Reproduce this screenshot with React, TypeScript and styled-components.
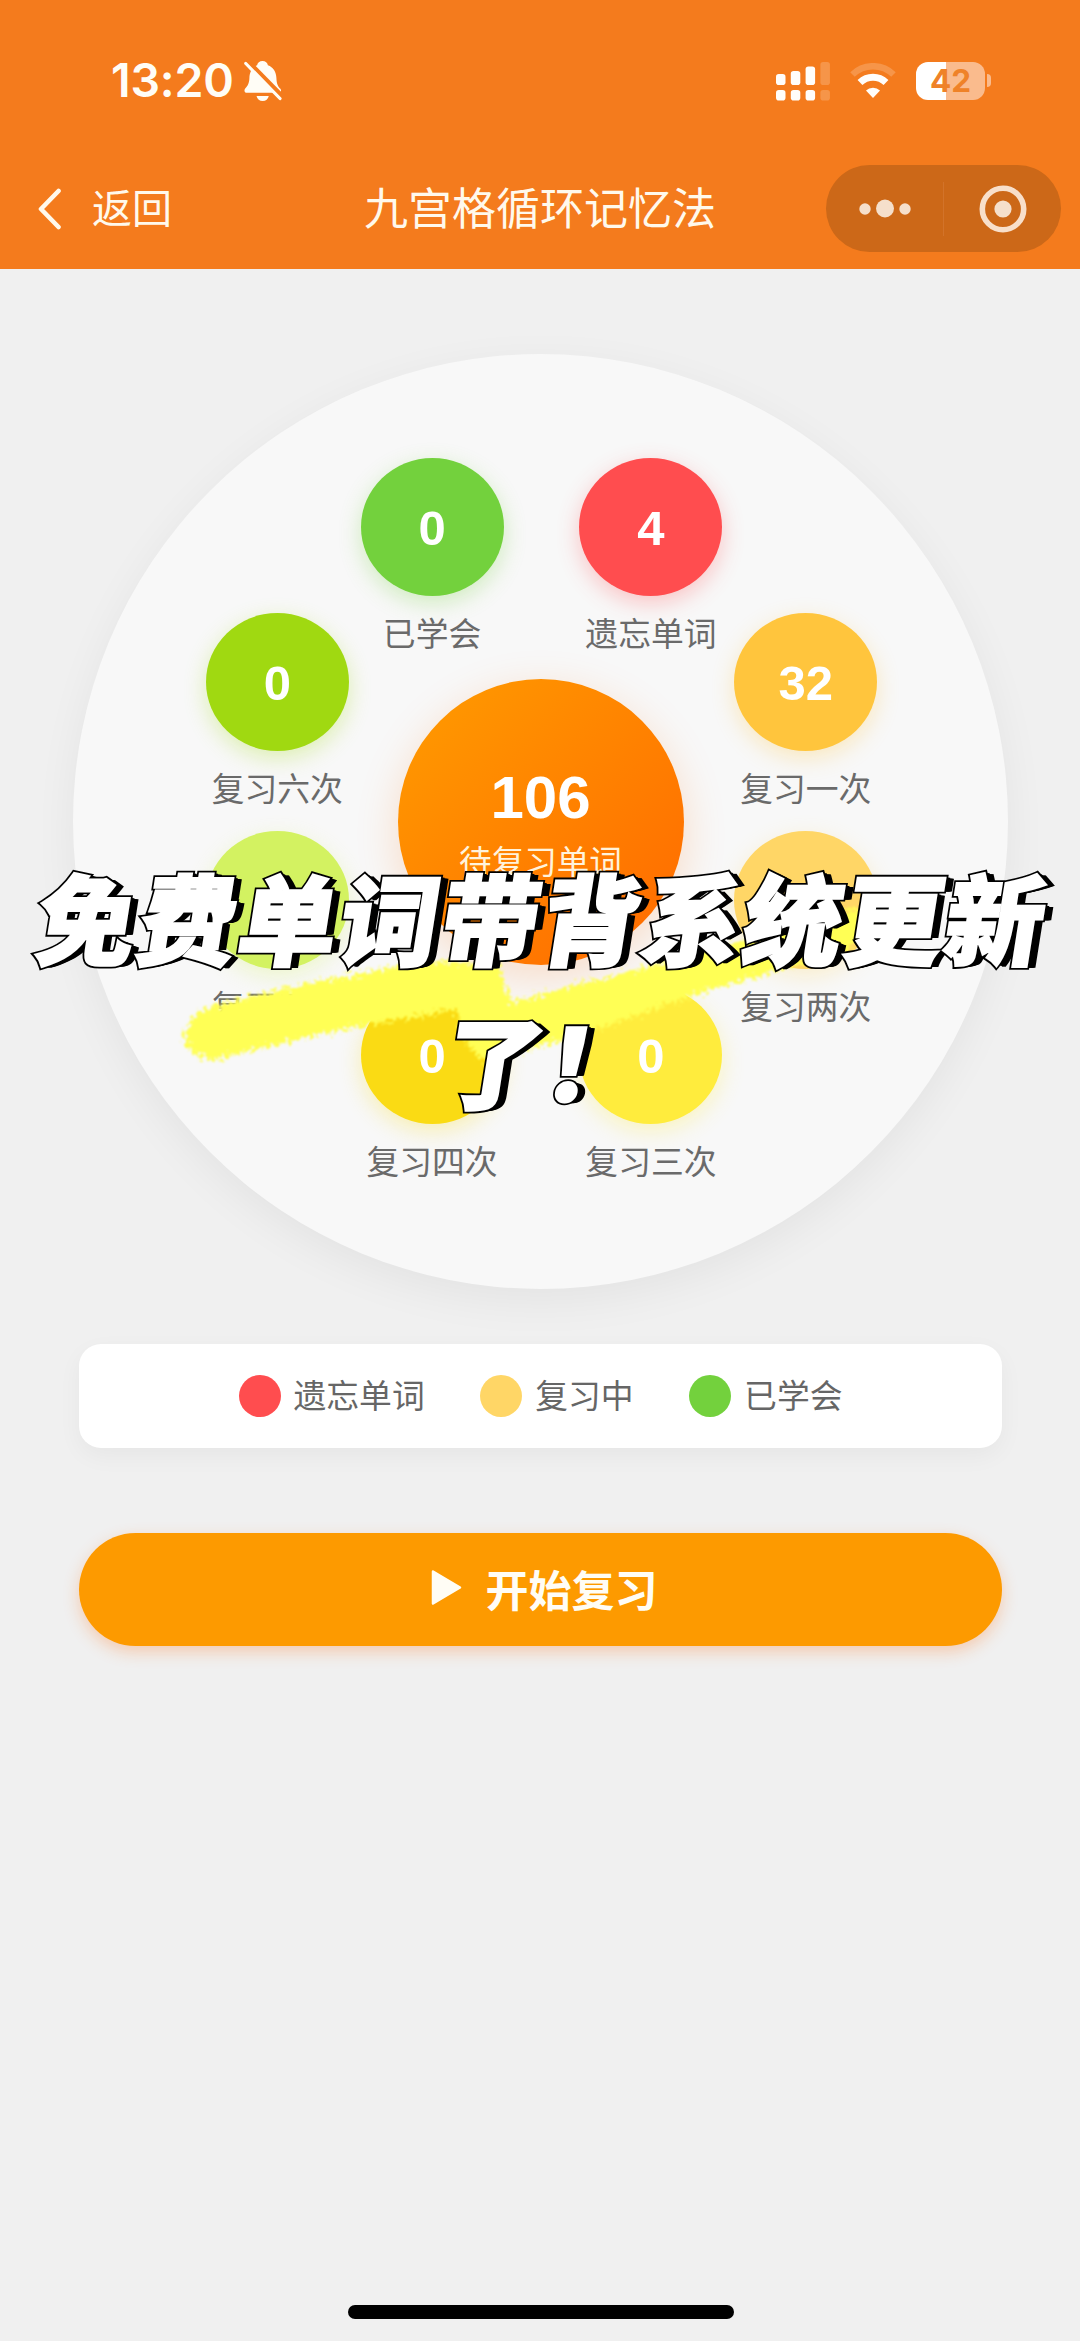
import React from "react";
import styled, { createGlobalStyle } from "styled-components";

const CJK = '"Noto Sans CJK SC", sans-serif';

const GlobalStyle = createGlobalStyle`
  * { box-sizing: border-box; }
  body { margin: 0; background: #f0f0f0; }
`;

const Screen = styled.div`
  position: relative;
  display: flex;
  flex-direction: column;
  width: 1080px;
  height: 2341px;
  overflow: hidden;
  background: #f0f0f0;
  font-family: "Liberation Sans", ${CJK};
`;

const Header = styled.header`
  display: flex;
  flex-direction: column;
  flex: none;
  height: 269px;
  background: #f47b1d;
  color: #fff9ec;
`;

const StatusBar = styled.div`
  display: flex;
  align-items: center;
  justify-content: space-between;
  height: 161px;
  padding: 0 89px 0 111px;
`;

const StatusGroup = styled.div<{ $gap: number }>`
  display: flex;
  align-items: center;
  gap: ${(p) => p.$gap}px;
`;

const Clock = styled.span`
  font: 600 46.5px/1 Inter, sans-serif;
  letter-spacing: -0.2px;
  color: #fffdf6;
`;

const Battery = styled.div`
  display: flex;
  align-items: center;
  gap: 2px;
`;

const BatteryBody = styled.div<{ $level: number }>`
  display: grid;
  place-items: center;
  width: 69px;
  height: 38px;
  border-radius: 12px;
  background: linear-gradient(
    90deg,
    #fff ${(p) => p.$level}%,
    #fabb8d ${(p) => p.$level}%
  );
  color: #ef8228;
  font: 700 31.5px/38px Inter, sans-serif;
`;

const BatteryNub = styled.div`
  width: 4px;
  height: 13px;
  border-radius: 0 5px 5px 0;
  background: #fabb8d;
`;

const NavBar = styled.nav`
  display: grid;
  grid-template-columns: 1fr auto 1fr;
  align-items: center;
  height: 95px;
  padding: 0 19px 0 37px;
  font-family: ${CJK};
`;

const Back = styled.div`
  display: flex;
  align-items: center;
  gap: 30px;
`;

const BackLabel = styled.span`
  padding-bottom: 5px;
  font-size: 40px;
  line-height: 1;
`;

const Title = styled.h1`
  margin: 0;
  padding: 0 18px 5px 0;
  font-size: 44px;
  font-weight: 400;
  line-height: 1;
`;

const Capsule = styled.div`
  display: flex;
  justify-self: end;
  align-items: center;
  width: 235px;
  height: 87px;
  border-radius: 44px;
  background: #cc6818;
`;

const CapsuleHalf = styled.div`
  display: grid;
  flex: 1;
  place-items: center;
`;

const Divider = styled.div`
  width: 1px;
  height: 54px;
  background: #d2732a;
`;

const Main = styled.main`
  display: flex;
  flex-direction: column;
  flex: 1;
  align-items: center;
  padding: 85px 0 0 1px;
`;

const Wheel = styled.section`
  position: relative;
  display: grid;
  place-items: center;
  width: 935px;
  height: 935px;
  border-radius: 50%;
  background: #f8f8f8;
  box-shadow: 0 12px 44px rgba(0, 0, 0, 0.055);
`;

const Hub = styled.div`
  display: flex;
  flex-direction: column;
  align-items: center;
  width: 286px;
  height: 286px;
  padding-top: 83px;
  border-radius: 50%;
  background: linear-gradient(135deg, #ff9800 8%, #ff6f00 88%);
  box-shadow: 0 12px 44px rgba(255, 111, 0, 0.2);
  color: #fff;
`;

const HubCount = styled.strong`
  font-size: 60px;
  line-height: 72px;
`;

const HubLabel = styled.span`
  margin-top: 2px;
  color: #fff3dc;
  font: 400 32.6px/48px ${CJK};
`;

const Node = styled.div`
  position: absolute;
  display: flex;
  flex-direction: column;
  align-items: center;
  width: 160px;
  height: 200px;
  margin: -100px 0 0 -80px;
`;

const NodeDisc = styled.div<{ $color: string }>`
  display: grid;
  flex: none;
  place-items: center;
  width: 143px;
  height: 138px;
  padding-top: 3px;
  border-radius: 50%;
  background: ${(p) => p.$color};
  box-shadow: 0 7px 22px ${(p) => p.$color}4d;
  color: #fff;
  font-size: 49px;
  font-weight: 700;
  line-height: 1;
`;

const NodeLabel = styled.span`
  margin-top: 12px;
  color: #6a6a6a;
  font: 400 32.8px/48px ${CJK};
  white-space: nowrap;
`;

const Legend = styled.section`
  display: flex;
  align-items: center;
  justify-content: center;
  gap: 55.5px;
  width: 923px;
  height: 104px;
  margin-top: 55px;
  border-radius: 22px;
  background: #fff;
  box-shadow: 0 8px 24px rgba(0, 0, 0, 0.045);
`;

const LegendItem = styled.div`
  display: flex;
  align-items: center;
  gap: 13px;
`;

const LegendLabel = styled.span`
  padding-bottom: 4px;
  color: #666;
  font: 400 32.8px/48px ${CJK};
`;

const LegendDot = styled.i<{ $color: string }>`
  width: 42px;
  height: 42px;
  border-radius: 50%;
  background: ${(p) => p.$color};
`;

const StartButton = styled.button`
  display: flex;
  align-items: center;
  justify-content: center;
  gap: 24px;
  width: 923px;
  height: 113px;
  margin-top: 85px;
  padding: 0 0 3px 7px;
  border: 0;
  border-radius: 57px;
  background: #fd9a00;
  box-shadow: 0 6px 16px rgba(255, 120, 30, 0.3);
  color: #fffdf5;
  font: 700 43px/60px ${CJK};
`;

const HomeIndicator = styled.div`
  align-self: center;
  width: 386px;
  height: 14px;
  margin: 0 0 22px 2px;
  border-radius: 7px;
  background: #000;
`;

const Brush = styled.svg`
  position: absolute;
  top: 880px;
  left: 160px;
`;

const Headline = styled.div`
  position: absolute;
  top: 844px;
  left: 0;
  display: flex;
  flex-direction: column;
  align-items: center;
  width: 1080px;
`;

const extrusion = Array.from(
  { length: 9 },
  (_, i) => `${i + 1}px ${((i + 1) / 12).toFixed(2)}px 0 #000`
).join(", ");

const HeadlineRow = styled.div<{ $shift: number }>`
  position: relative;
  height: 143px;
  transform: translateX(${(p) => p.$shift}px) skewX(-9deg);
  color: #000;
  font: 900 98.5px/143px ${CJK};
  letter-spacing: 2.4px;
  white-space: nowrap;
  -webkit-text-stroke: 6px #000;
  text-shadow: ${extrusion};

  &::after {
    content: attr(data-text);
    position: absolute;
    top: 0;
    left: 0;
    color: #fff;
    -webkit-text-stroke: 2.4px #fff;
    text-shadow: none;
  }
`;

const nodes = [
  { label: "遗忘单词", count: 4, color: "#ff4d4f" },
  { label: "复习一次", count: 32, color: "#ffc53d" },
  { label: "复习两次", count: 70, color: "#ffd666" },
  { label: "复习三次", count: 0, color: "#ffec3d" },
  { label: "复习四次", count: 0, color: "#fadb14" },
  { label: "复习五次", count: 0, color: "#d3f261" },
  { label: "复习六次", count: 0, color: "#a0d911" },
  { label: "已学会", count: 0, color: "#73d13d" },
];

const legend = [
  { label: "遗忘单词", color: "#ff4d4f" },
  { label: "复习中", color: "#ffd666" },
  { label: "已学会", color: "#73d13d" },
];

const RADIUS = 286;

function nodePosition(index: number) {
  const angle = ((22.5 + index * 45) * Math.PI) / 180;
  return {
    left: 468.5 + RADIUS * Math.sin(angle),
    top: 468 - RADIUS * Math.cos(angle),
  };
}

const BellOff = () => (
  <svg width="38" height="42" viewBox="0 0 38 42">
    <path
      d="M18.500 1c3 0 5 1.900 5.400 4.200 5.300 2 8.300 6.600 8.500 12.800.2 6 1.600 8.500 4 10.800 1.200 1.200.6 4-1.400 4H3c-2.600 0-3.200-2.700-1.800-4.300 2.500-2.700 4-5 4.200-10.500.2-6.200 2.900-10.800 7.700-12.800C13.500 2.900 15.500 1 18.500 1Z"
      fill="#fffdf6"
    />
    <path d="M12.500 36h12.300c-.7 3-3 5-6.100 5s-5.500-2-6.200-5Z" fill="#fffdf6" />
    <path d="M1.500 0 39.500 38.500" stroke="#f47b1d" strokeWidth="6" />
    <path d="M1.800 3.500 36 38.500" stroke="#fffdf6" strokeWidth="3.200" strokeLinecap="round" />
  </svg>
);

const Signal = () => (
  <svg width="54" height="40" viewBox="0 0 54 40" fill="#fffdfa">
    {[
      [0, 13],
      [14.8, 10],
      [29.600, 5.500],
      [44.400, 1],
    ].map(([x, y], i) => (
      <g key={x} opacity={i === 3 ? 0.2 : 1}>
        <rect x={x} y={y} width="9.500" height={24 - y} rx="2.800" />
        <rect x={x} y="29" width="9.500" height="10.500" rx="2.800" />
      </g>
    ))}
  </svg>
);

const Wifi = () => (
  <svg width="46" height="36" viewBox="0 0 46 36" fill="none" stroke="#fffdfa">
    <path d="M2.500 11.500a29.500 29.500 0 0 1 41 0" strokeWidth="6.500" opacity="0.2" />
    <path d="M10 19.500a18.800 18.800 0 0 1 26 0" strokeWidth="7" />
    <path d="M16 27.500a10 10 0 0 1 14 0l-7 7.500Z" fill="#fffdfa" stroke="none" />
  </svg>
);

export default function App() {
  return (
    <Screen>
      <GlobalStyle />
      <Header>
        <StatusBar>
          <StatusGroup $gap={10}>
            <Clock>13:20</Clock>
            <BellOff />
          </StatusGroup>
          <StatusGroup $gap={20}>
            <Signal />
            <Wifi />
            <Battery>
              <BatteryBody $level={43}>42</BatteryBody>
              <BatteryNub />
            </Battery>
          </StatusGroup>
        </StatusBar>
        <NavBar>
          <Back>
            <svg width="25" height="42" viewBox="0 0 25 42" fill="none">
              <path
                d="M21.500 3 4 21l17.500 18"
                stroke="#fff9ec"
                strokeWidth="4.600"
                strokeLinecap="round"
                strokeLinejoin="round"
              />
            </svg>
            <BackLabel>返回</BackLabel>
          </Back>
          <Title>九宫格循环记忆法</Title>
          <Capsule>
            <CapsuleHalf>
              <svg width="52" height="20" viewBox="0 0 52 20" fill="#f5dfcb">
                <circle cx="6" cy="10" r="5.700" />
                <circle cx="26" cy="9.500" r="9" />
                <circle cx="46" cy="10" r="5.700" />
              </svg>
            </CapsuleHalf>
            <Divider />
            <CapsuleHalf>
              <svg width="48" height="48" viewBox="0 0 48 48">
                <circle cx="24" cy="24" r="20.700" fill="none" stroke="#f8dfca" strokeWidth="5.600" />
                <circle cx="24" cy="24" r="8.600" fill="#f5dfcb" />
              </svg>
            </CapsuleHalf>
          </Capsule>
        </NavBar>
      </Header>

      <Main>
        <Wheel>
          <Hub>
            <HubCount>106</HubCount>
            <HubLabel>待复习单词</HubLabel>
          </Hub>
          {nodes.map((node, i) => (
            <Node key={node.label} style={nodePosition(i)}>
              <NodeDisc $color={node.color}>{node.count}</NodeDisc>
              <NodeLabel>{node.label}</NodeLabel>
            </Node>
          ))}
        </Wheel>
        <Legend>
          {legend.map((item) => (
            <LegendItem key={item.label}>
              <LegendDot $color={item.color} />
              <LegendLabel>{item.label}</LegendLabel>
            </LegendItem>
          ))}
        </Legend>
        <StartButton>
          <svg width="31" height="38" viewBox="0 0 31 38">
            <path d="M2 2.500 29 18.500 2 34.500Z" fill="#fffdf5" stroke="#fffdf5" strokeWidth="2.500" strokeLinejoin="round" />
          </svg>
          开始复习
        </StartButton>
      </Main>
      <HomeIndicator />

      <Brush width="740" height="200" viewBox="160 880 740 200">
        <defs>
          <filter id="rough" x="-5%" y="-10%" width="110%" height="120%">
            <feTurbulence type="fractalNoise" baseFrequency="0.27" numOctaves="3" seed="4" result="n" />
            <feDisplacementMap in="SourceGraphic" in2="n" scale="20" xChannelSelector="R" yChannelSelector="G" />
            <feGaussianBlur stdDeviation="0.8" />
          </filter>
        </defs>
        <path
          d="M184 1036 191 1018 212 1006 260 994 330 979 400 966 445 961 499 966 505 985 511 1002 560 989 640 969 700 951 780 932 858 908 868 925 850 950 770 973 700 993 640 1014 590 1032 530 1049 482 1060 468 1045 456 1010 400 1019 370 1024 300 1039 240 1053 213 1060 189 1052Z"
          fill="#ffff55"
          filter="url(#rough)"
        />
      </Brush>

      <Headline>
        <HeadlineRow $shift={4} data-text="免费单词带背系统更新">
          免费单词带背系统更新
        </HeadlineRow>
        <HeadlineRow $shift={7} data-text="了！">
          了！
        </HeadlineRow>
      </Headline>
    </Screen>
  );
}
